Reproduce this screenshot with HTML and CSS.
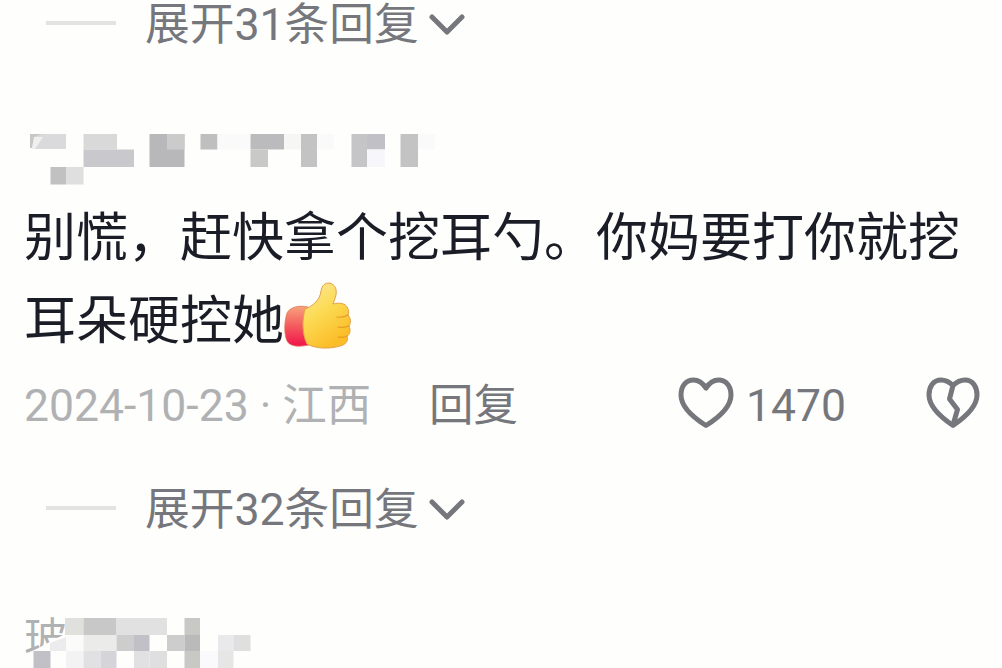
FILE: index.html
```html
<!DOCTYPE html>
<html lang="zh-CN">
<head>
    <meta charset="UTF-8">
    <meta name="viewport" content="width=device-width, initial-scale=1.0">
    <title>评论</title>
    <link rel="stylesheet" href="styles.css">
</head>
<body>

<div class="comments">
    <div class="expand">
        <span class="line"></span>
        <span class="expand-text">展开31条回复</span>
        <svg class="arrow" viewBox="0 0 36 22"><path d="M3 4 L18 19 L33 4"/></svg>
    </div>

    <div class="comment">
        <!-- blurred user name -->
        <svg class="name" viewBox="24 132 420 56">
            <path fill="#dadadd" d="M33 134h33v15H33z"/>
            <path fill="#f0f0ef" d="M33 137h10l-8 12h-3z"/>
            <path fill="#c6c8c6" d="M30 134h12l-8 3-2 11h-2z"/>
            <path fill="#d9d9d9" d="M83.500 134H117v15.500H83.500z"/>
            <path fill="#c9c9cd" d="M83.500 149.500H134V167H83.500z"/>
            <path fill="#c1c1c1" d="M50.500 167H66v17.500H50.500z"/>
            <path fill="#dfdfdf" d="M66 167h17.500v17.500H66z"/>
            <path fill="#b8b8ba" d="M149.500 134h35v33h-35z"/>
            <path fill="#cbcbcb" d="M167 134h17.500v15.500H167z"/>
            <path fill="#bfbfc0" d="M200.500 134h17v15.500h-17z"/>
            <path fill="#fafafa" d="M217.500 134H250v15.500h-32.500zM317 134h17v15.500h-17zM418 134h17v15.500h-17z"/>
            <path fill="#bbbbbd" d="M250.500 134H284v15.500h-33.500z"/>
            <path fill="#c9c9c7" d="M250.500 149.500H268V167h-17.500z"/>
            <path fill="#f6f6f5" d="M284 134h17v15.500h-17z"/>
            <path fill="#c3c3c4" d="M301 134h16v33h-16zM400.500 134H418v33h-17.500z"/>
            <path fill="#c5c5c8" d="M351.500 134H367v33h-15.500z"/>
            <path fill="#c1c0c7" d="M367 134h18v15.500h-18z"/>
            <path fill="#f7f7fb" d="M367 149.500h18V167h-18z"/>
        </svg>
        <p class="text">别慌，赶快拿个挖耳勺。你妈要打你就挖耳朵硬控她<svg class="thumb" viewBox="0 0 68 68">
            <defs>
                <linearGradient id="cuff" x1="0" y1="0" x2="0" y2="1">
                    <stop offset="0" stop-color="#f8a27c"/>
                    <stop offset=".5" stop-color="#f45a5e"/>
                    <stop offset="1" stop-color="#f0134b"/>
                </linearGradient>
                <linearGradient id="hand" x1="0" y1="0" x2=".5" y2="1">
                    <stop offset="0" stop-color="#fbe9a0"/>
                    <stop offset=".5" stop-color="#fcdb55"/>
                    <stop offset="1" stop-color="#fbbd28"/>
                </linearGradient>
            </defs>
            <path fill="url(#cuff)" stroke="#dd7a55" stroke-width=".8" d="M24 25C15 23 6 25 3 31C0 41 0 52 3 59C6 65 16 65 25 63z"/>
            <path fill="url(#hand)" stroke="#e5a044" stroke-width="1" d="M21 27C29 24 36 18 37 9C38 3 41 1 45 1C51 2 53 7 52 13C51 17 50 19 49 22C56 20 62 22 63 25C65 28 65 31 64 33C67 36 67 41 65 44C67 48 66 53 63 54C65 59 61 63 56 64C46 67 32 67 23 62C18 52 18 38 21 27z"/>
            <path fill="none" stroke="#e59a28" stroke-width="1.200" stroke-linecap="round" d="M53 35Q59 36 64 33M54 45Q60 46 65 44M54 55Q59 56 63 54"/>
        </svg></p>
        <div class="meta">
            <span class="date">2024-10-23 · 江西</span>
            <span class="reply">回复</span>
            <svg class="heart" viewBox="0 0 56 52"><path d="M28 11C24 5 20 3 15.500 3C8 3 3 9 3 18C3 30 16 41 28 48.500C40 41 53 30 53 18C53 9 48 3 40.500 3C36 3 32 5 28 11z"/></svg>
            <span class="count">1470</span>
            <svg class="dislike" viewBox="0 0 54 52"><path d="M27 8.500C23 4.500 19 3 15 3C7 3 3 10 3 18C3 30 16 41 27 48.500C38 41 51 30 51 18C51 10 47 3 39 3C35 3 31 4.500 27 8.500L23.500 22L31.500 32.500L27 48"/></svg>
        </div>
    </div>

    <div class="expand">
        <span class="line"></span>
        <span class="expand-text">展开32条回复</span>
        <svg class="arrow" viewBox="0 0 36 22"><path d="M3 4 L18 19 L33 4"/></svg>
    </div>

    <div class="next-name">
        <span>玻</span>
        <svg class="next-blur" viewBox="24 614 236 54">
            <path fill="#fefefd" d="M42 646l23-12v-16h18v50H33v-17z"/>
            <path fill="#e0e0dd" d="M65 618h18.500v17H65z"/>
            <path fill="#c8c8c8" d="M83.500 618h33v17h-33z"/>
            <path fill="#e1e1e2" d="M116.500 618H167v17h-50.500z"/>
            <path fill="#c8c8c5" d="M184.500 618H200v17h-15.500zM184.500 651H200v17h-15.500z"/>
            <path fill="#ececef" d="M50 643l16-6v14H50z"/>
            <path fill="#fbfbfa" d="M66 635h17.500v16H66z"/>
            <path fill="#ebebe9" d="M83.500 635h33v16h-33z"/>
            <path fill="#cdcdce" d="M116.500 635H134v16h-17.500zM167 635h17.500v16H167z"/>
            <path fill="#c0c0c6" d="M134 635h15.500v16H134zM33.500 651h17v17h-17z"/>
            <path fill="#bababa" d="M184.500 635H200v16h-15.500z"/>
            <path fill="#e9e9ec" d="M218 635h15.500v16H218z"/>
            <path fill="#dfdfdf" d="M233.500 635h17v16h-17zM149.500 651H167v17h-17.500z"/>
            <path fill="#f3f3f4" d="M66 651h17.500v17H66z"/>
            <path fill="#e1e1e4" d="M83.500 651h17v17h-17zM134 651h15.500v17H134z"/>
            <path fill="#d5d5d9" d="M100.500 651h16v17h-16z"/>
            <path fill="#fafafc" d="M200 651h18v17h-18z"/>
            <path fill="#e6e6e6" d="M218 651h15.500v17H218z"/>
        </svg>
    </div>
</div>

</body>
</html>
```
FILE: styles.css
```css
* {
    margin: 0;
    padding: 0;
    box-sizing: border-box;
}

body {
    font-family: Roboto, "Noto Sans CJK SC", sans-serif;
    font-weight: 400;
    background-color: #fefefd;
    color: #76777c;
    height: 668px;
    overflow: hidden;
}

svg {
    display: block;
    flex: none;
}

.comments {
    padding-left: 24px;
}

.expand {
    display: flex;
    align-items: center;
    height: 48px;
    padding-left: 22px;
    font-size: 44.7px;
    white-space: nowrap;
}

.line {
    width: 70px;
    height: 4px;
    margin-right: 29px;
    margin-bottom: 2px;
    background-color: #e3e3e2;
}

.expand-text {
    width: 274px;
    padding-top: 2px;
    line-height: 46px;
}

.arrow {
    width: 36px;
    height: 22px;
    margin-left: 10px;
}

.arrow path,
.heart path,
.dislike path {
    fill: none;
    stroke: #76777c;
    stroke-width: 5;
    stroke-linecap: round;
    stroke-linejoin: round;
}

.comment {
    padding-top: 84px;
    height: 437px;
}

.name {
    width: 420px;
    height: 56px;
}

.text {
    width: 940px;
    height: 166px;
    margin-top: 9px;
    font-size: 52px;
    line-height: 83px;
    color: #1a1c26;
}

.thumb {
    display: inline-block;
    width: 68px;
    height: 68px;
    vertical-align: -11px;
}

.meta {
    display: flex;
    align-items: center;
    height: 56px;
    margin-top: 15px;
    font-size: 44.5px;
    line-height: 56px;
    white-space: nowrap;
}

.date {
    width: 405px;
    color: #b0b1b3;
}

.reply {
    width: 249px;
}

.heart {
    width: 56px;
    height: 52px;
    margin-top: -6px;
}

.count {
    width: 180px;
    padding-left: 12px;
}

.dislike {
    width: 54px;
    height: 52px;
    margin-left: 12px;
    margin-top: -6px;
}

.next-name {
    position: relative;
    height: 54px;
    margin-top: 81px;
    font-size: 43px;
    line-height: 50px;
    color: #b0b1b3;
}

.next-blur {
    position: absolute;
    left: 0;
    top: 0;
    width: 236px;
    height: 54px;
}
```
